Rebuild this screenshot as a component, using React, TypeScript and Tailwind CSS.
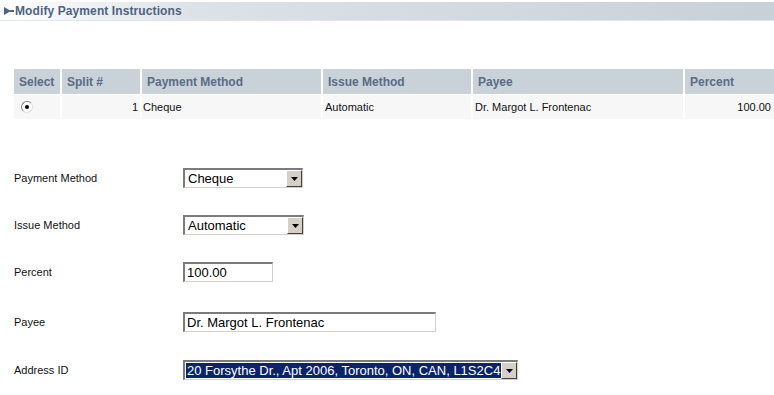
import React from "react";

const font = { fontFamily: '"Liberation Sans", Arial, sans-serif' };

function Sunken({ className, children }: { className?: string; children?: React.ReactNode }) {
  return (
    <div className={"border-t-2 border-l-2 border-b border-r border-t-[#7b7b7b] border-l-[#7b7b7b] border-b-[#d4d0c8] border-r-[#d4d0c8] bg-white " + (className ?? "")}>
      {children}
    </div>
  );
}

function DropButton() {
  return (
    <div className="w-[16px] h-full bg-[#d4d0c8] border border-t-white border-l-white border-b-[#404040] border-r-[#404040] flex items-center justify-center">
      <svg width="7" height="4" viewBox="0 0 7 4">
        <path d="M0 0H7L3.5 4Z" fill="#000" />
      </svg>
    </div>
  );
}

function Select({ value, width, selected }: { value: string; width: string; selected?: boolean }) {
  return (
    <Sunken className={`${width} h-[20px] flex items-stretch`}>
      <div className="flex-1 flex items-center pl-[1px] overflow-hidden">
        {selected ? (
          <span className="bg-[#0a246a] text-white text-[13px] leading-[15px] px-[1px] outline-1 outline-dotted outline-white whitespace-nowrap w-full">
            {value}
          </span>
        ) : (
          <span className="text-[13px] leading-[15px] text-black px-[2px]">{value}</span>
        )}
      </div>
      <DropButton />
    </Sunken>
  );
}

function Input({ value, width }: { value: string; width: string }) {
  return (
    <Sunken className={`${width} h-[20px] flex items-center px-[2px]`}>
      <span className="text-[13px] leading-[15px] text-black">{value}</span>
    </Sunken>
  );
}

function Row({ label, children, mt }: { label: string; children: React.ReactNode; mt: string }) {
  return (
    <div className={`flex items-center h-[20px] ${mt}`}>
      <div className="w-[169px] text-[11px] text-[#111]">{label}</div>
      {children}
    </div>
  );
}

const cols = "grid grid-cols-[46px_78px_179px_148px_210px_1fr] gap-x-[2px]";

export default function App() {
  return (
    <div className="w-[774px] h-[395px] bg-white overflow-hidden pt-[2px]" style={font}>
      {/* title bar */}
      <div className="h-[19px] bg-gradient-to-r from-white via-[#dde2e7] via-25% to-[#c8d0d8] border-b border-b-[#e3e6e9] flex items-center pl-[4px]">
        <svg width="10" height="8" viewBox="0 0 10 8" className="mr-[1px]">
          <path d="M0 0L7 4L0 8Z M6 3H10V5H6Z" fill="#4d6381" />
        </svg>
        <span className="text-[12px] font-bold text-[#4d6381] tracking-[0.1px]">Modify Payment Instructions</span>
      </div>

      {/* table */}
      <div className="ml-[14px] mt-[48px] text-[11px]">
        <div className={`${cols} h-[25px]`}>
          {["Select", "Split #", "Payment Method", "Issue Method", "Payee", "Percent"].map((h) => (
            <div key={h} className="bg-[#c9d1d9] flex items-center pl-[5px] text-[12px] font-bold text-[#5a6c86]">
              {h}
            </div>
          ))}
        </div>
        <div className={`${cols} h-[24px] mt-[1px] text-[#111]`}>
          <div className="bg-[#f7f7f7] flex items-center pl-[7px]">
            <div className="w-[12px] h-[12px] rounded-full border border-t-[#808080] border-l-[#808080] border-b-[#e0e0e0] border-r-[#e0e0e0] bg-white flex items-center justify-center">
              <div className="w-[4px] h-[4px] rounded-full bg-black" />
            </div>
          </div>
          <div className="bg-[#f7f7f7] flex items-center justify-end pr-[2px]">1</div>
          <div className="bg-[#f7f7f7] flex items-center pl-[1px]">Cheque</div>
          <div className="bg-[#f7f7f7] flex items-center pl-[2px]">Automatic</div>
          <div className="bg-[#f7f7f7] flex items-center pl-[2px]">Dr. Margot L. Frontenac</div>
          <div className="bg-[#f7f7f7] flex items-center justify-end pr-[3px]">100.00</div>
        </div>
      </div>

      {/* form */}
      <div className="ml-[14px]">
        <Row label="Payment Method" mt="mt-[49px]">
          <Select value="Cheque" width="w-[120px]" />
        </Row>
        <Row label="Issue Method" mt="mt-[27px]">
          <Select value="Automatic" width="w-[121px]" />
        </Row>
        <Row label="Percent" mt="mt-[27px]">
          <Input value="100.00" width="w-[90px]" />
        </Row>
        <Row label="Payee" mt="mt-[30px]">
          <Input value="Dr. Margot L. Frontenac" width="w-[253px]" />
        </Row>
        <Row label="Address ID" mt="mt-[28px]">
          <Select value="20 Forsythe Dr., Apt 2006, Toronto, ON, CAN, L1S2C4" width="w-[335px]" selected />
        </Row>
      </div>
    </div>
  );
}
